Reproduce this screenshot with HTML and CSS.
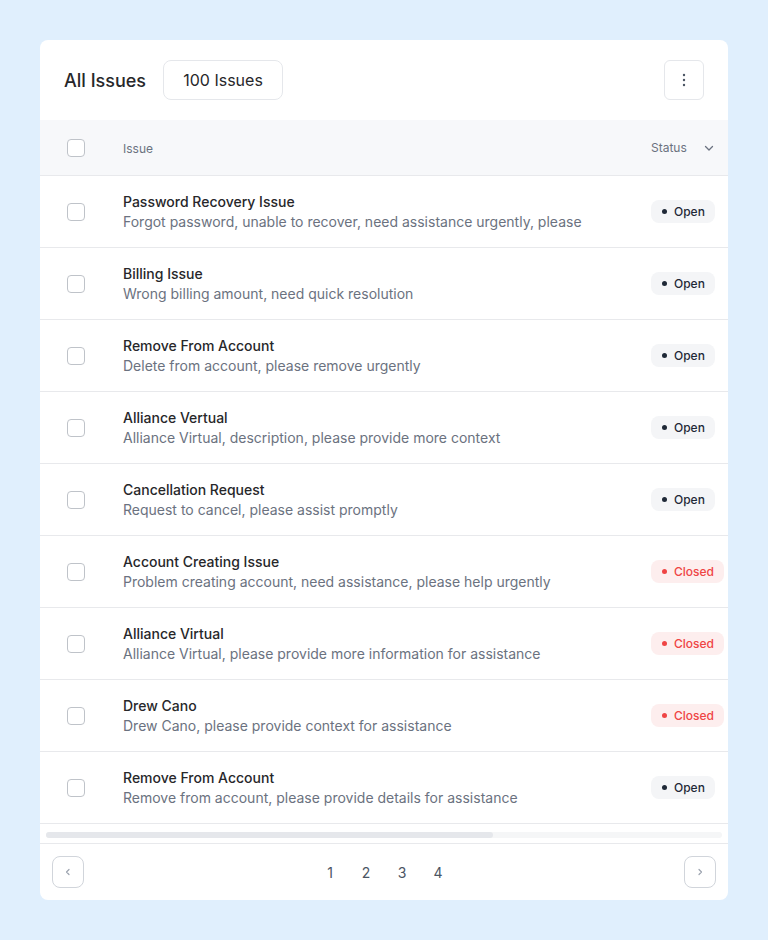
FILE: index.html
```html
<!DOCTYPE html>
<html lang="en">
<head>
<meta charset="utf-8">
<title>All Issues</title>
<link rel="stylesheet" href="styles.css">
</head>
<body>
<div class="card">
  <div class="top">
    <div class="title">All Issues</div>
    <div class="count">100 Issues</div>
    <button class="kebab" aria-label="More">
      <svg width="16" height="16" viewBox="0 0 16 16"><circle cx="8" cy="3" r="1.2" fill="#4b5563"/><circle cx="8" cy="8" r="1.2" fill="#4b5563"/><circle cx="8" cy="13" r="1.2" fill="#4b5563"/></svg>
    </button>
  </div>
  <div class="table">
    <div class="row head">
      <div class="cb"></div>
      <div class="main"><span class="th">Issue</span></div>
      <div class="status"><span class="th">Status</span>
        <svg class="chev" width="12" height="12" viewBox="0 0 12 12"><path d="M2.5 4.5 L6 8 L9.5 4.5" fill="none" stroke="#6b7280" stroke-width="1.3" stroke-linecap="round" stroke-linejoin="round"/></svg>
      </div>
    </div>
    <div class="row"><div class="cb"></div><div class="main"><div class="name">Password Recovery Issue</div><div class="desc">Forgot password, unable to recover, need assistance urgently, please</div></div><div class="status"><span class="badge open"><i></i>Open</span></div></div>
    <div class="row"><div class="cb"></div><div class="main"><div class="name">Billing Issue</div><div class="desc">Wrong billing amount, need quick resolution</div></div><div class="status"><span class="badge open"><i></i>Open</span></div></div>
    <div class="row"><div class="cb"></div><div class="main"><div class="name">Remove From Account</div><div class="desc">Delete from account, please remove urgently</div></div><div class="status"><span class="badge open"><i></i>Open</span></div></div>
    <div class="row"><div class="cb"></div><div class="main"><div class="name">Alliance Vertual</div><div class="desc">Alliance Virtual, description, please provide more context</div></div><div class="status"><span class="badge open"><i></i>Open</span></div></div>
    <div class="row"><div class="cb"></div><div class="main"><div class="name">Cancellation Request</div><div class="desc">Request to cancel, please assist promptly</div></div><div class="status"><span class="badge open"><i></i>Open</span></div></div>
    <div class="row"><div class="cb"></div><div class="main"><div class="name">Account Creating Issue</div><div class="desc">Problem creating account, need assistance, please help urgently</div></div><div class="status"><span class="badge closed"><i></i>Closed</span></div></div>
    <div class="row"><div class="cb"></div><div class="main"><div class="name">Alliance Virtual</div><div class="desc">Alliance Virtual, please provide more information for assistance</div></div><div class="status"><span class="badge closed"><i></i>Closed</span></div></div>
    <div class="row"><div class="cb"></div><div class="main"><div class="name">Drew Cano</div><div class="desc">Drew Cano, please provide context for assistance</div></div><div class="status"><span class="badge closed"><i></i>Closed</span></div></div>
    <div class="row"><div class="cb"></div><div class="main"><div class="name">Remove From Account</div><div class="desc">Remove from account, please provide details for assistance</div></div><div class="status"><span class="badge open"><i></i>Open</span></div></div>
  </div>
  <div class="scroll"><div class="track"><div class="thumb"></div></div></div>
  <div class="pager">
    <button class="nav" aria-label="Previous">
      <svg width="12" height="12" viewBox="0 0 12 12"><path d="M7 3.5 L4.5 6 L7 8.5" fill="none" stroke="#9ca3af" stroke-width="1.2" stroke-linecap="round" stroke-linejoin="round"/></svg>
    </button>
    <div class="pages"><span>1</span><span>2</span><span>3</span><span>4</span></div>
    <button class="nav" aria-label="Next">
      <svg width="12" height="12" viewBox="0 0 12 12"><path d="M5 3.5 L7.5 6 L5 8.5" fill="none" stroke="#9ca3af" stroke-width="1.2" stroke-linecap="round" stroke-linejoin="round"/></svg>
    </button>
  </div>
</div>
</body>
</html>
```
FILE: styles.css
```css
* { box-sizing: border-box; }
html, body { margin: 0; }
body {
  background: #e0effd;
  padding: 40px;
  font-family: Inter, "Noto Sans", sans-serif;
  color: #1f2937;
}
.card {
  width: 688px;
  height: 860px;
  background: #fff;
  border-radius: 8px;
  overflow: hidden;
  display: flex;
  flex-direction: column;
}
.top {
  height: 80px;
  flex: none;
  display: flex;
  align-items: center;
  padding: 0 24px;
}
.title { font-size: 18px; font-weight: 500; color: #27272a; }
.count {
  margin-left: 17px;
  height: 40px;
  width: 120px;
  border: 1px solid #e5e7eb;
  border-radius: 8px;
  display: flex;
  align-items: center;
  justify-content: center;
  font-size: 16px;
  font-weight: 400;
  color: #27272a;
}
.kebab {
  margin-left: auto;
  width: 40px;
  height: 40px;
  border: 1px solid #e5e7eb;
  border-radius: 6px;
  background: #fff;
  display: flex;
  align-items: center;
  justify-content: center;
  padding: 0;
}
.table { flex: none; }
.row {
  height: 72px;
  display: flex;
  align-items: center;
  border-bottom: 1px solid #e8e9ec;
  width: 760px;
}
.row.head {
  height: 56px;
  background: #f7f8fa;
}
.cb {
  flex: none;
  width: 18px;
  height: 18px;
  margin-left: 27px;
  border: 1.5px solid #bfc3c9;
  border-radius: 4px;
  background: #fff;
}
.main {
  flex: none;
  width: 528px;
  margin-left: 38px;
}
.head .main, .head .status { line-height: 14px; }
.th { font-size: 12px; color: #6b7280; }
.name { font-size: 14px; line-height: 20px; font-weight: 500; color: #27272a; }
.desc { font-size: 14px; line-height: 20px; color: #6b7280; }
.status {
  flex: none;
  display: flex;
  align-items: center;
}
.chev { margin-left: 16px; }
.badge {
  display: inline-flex;
  align-items: center;
  height: 23px;
  padding: 0 10px 0 11px;
  border-radius: 8px;
  font-size: 12px;
  font-weight: 500;
}
.badge i {
  width: 5px;
  height: 5px;
  border-radius: 50%;
  margin-right: 7px;
}
.badge.open { background: #f4f5f7; color: #1f2937; }
.badge.open i { background: #1f2937; }
.badge.closed { background: #fdeeee; color: #ef4444; }
.badge.closed i { background: #ef4444; }
.scroll {
  height: 20px;
  flex: none;
  border-bottom: 1px solid #e8e9ec;
  padding: 8px 6px 0;
}
.track {
  height: 6px;
  border-radius: 3px;
  background: #f5f6f7;
}
.thumb {
  width: 447px;
  height: 6px;
  border-radius: 3px;
  background: #e5e7eb;
}
.pager {
  flex: 1;
  display: flex;
  align-items: center;
  justify-content: space-between;
  padding: 0 12px;
}
.nav {
  width: 32px;
  height: 32px;
  border: 1px solid #d1d5db;
  border-radius: 8px;
  background: #fff;
  display: flex;
  align-items: center;
  justify-content: center;
  padding: 0;
}
.pages {
  display: flex;
  font-size: 14px;
  color: #4b5563;
}
.pages span { width: 36px; text-align: center; }
```
